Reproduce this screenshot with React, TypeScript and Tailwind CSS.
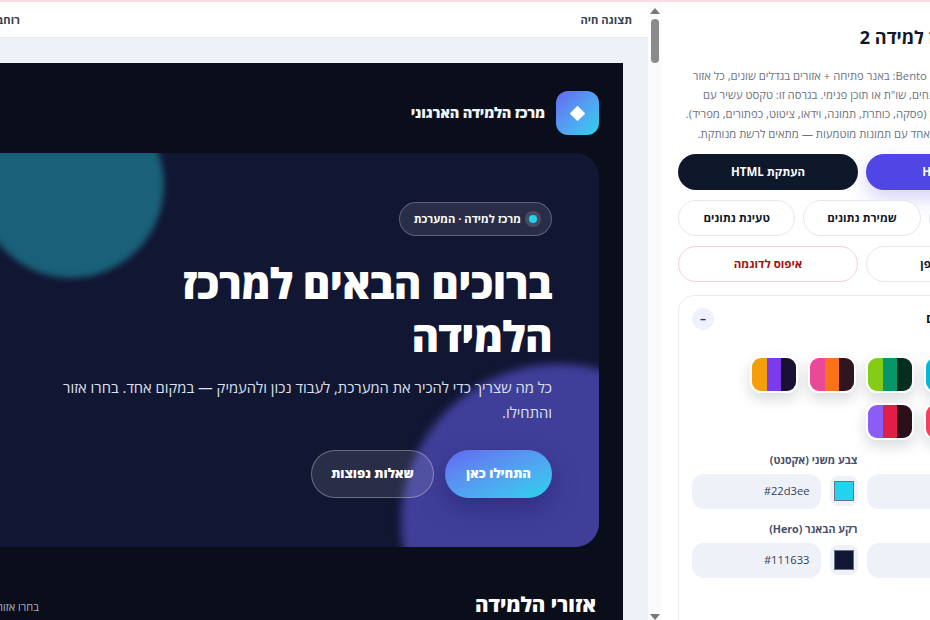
const swatchRows = [
  [
    ['#f59e0b', '#7c3aed', '#1a1033'],
    ['#ec4899', '#f97316', '#2e1520'],
    ['#84cc16', '#059669', '#052e1f'],
    ['#06b6d4', '#2563eb', '#0f172a'],
    ['#6366f1', '#22d3ee', '#111633'],
  ],
  [
    ['#8b5cf6', '#e11d48', '#2c0f1a'],
    ['#f43f5e', '#f59e0b', '#2a1215'],
    ['#14b8a6', '#0ea5e9', '#0c2a33'],
  ],
]

function Swatch({ colors }: { colors: string[] }) {
  return (
    <div className="flex h-[37px] w-[48px] overflow-hidden rounded-[11px] border-2 border-white shadow-[0_6px_14px_rgba(15,23,42,0.16)]">
      {colors.map((c) => (
        <span key={c} className="flex-1" style={{ backgroundColor: c }} />
      ))}
    </div>
  )
}

function ColorField({ label, value }: { label: string; value: string }) {
  return (
    <div>
      <div className="mb-[6px] h-[16px] text-[10.7px] font-bold leading-[16px] text-[#475069]">{label}</div>
      <div className="flex items-center gap-[9px]">
        <div className="flex h-[30px] w-[28px] shrink-0 items-center justify-center rounded-[8px] bg-[#eef2f8]">
          <span className="h-[20px] w-[20px] border border-[#64748b]" style={{ backgroundColor: value }} />
        </div>
        <div className="flex h-[35px] flex-1 items-center rounded-[12px] bg-[#eef2f8] px-[11px] text-[11.2px] text-[#334155]">{value}</div>
      </div>
    </div>
  )
}

export default function App() {
  return (
    <div className="h-[620px] w-[930px] overflow-hidden bg-white font-['Open_Sans','Liberation_Sans',sans-serif]">
      <div className="h-[2px] bg-[#f9dde0]" />
      <div className="ml-[-300px] flex h-[618px] w-[1362px]" dir="rtl">
        {/* settings panel */}
        <aside className="w-[400px] shrink-0 overflow-hidden bg-white px-[16px] pt-[22px]">
          <h2 className="text-[18px] font-bold leading-[26px] text-[#111827]">מחולל דף מרכז למידה 2</h2>
          <p className="mt-[16px] whitespace-nowrap text-[11.25px] leading-[19.2px] text-[#6b7280]">
            תבנית עיצוב חדשה בסגנון Bento: באנר פתיחה + אזורים בגדלים שונים, כל אזור
            <br />
            עם הסבר קצר, רשימת מונחים, שו"ת או תוכן פנימי. בגרסה זו: טקסט עשיר עם
            <br />
            וכולל עורך בלוקים של תוכן (פסקה, כותרת, תמונה, וידאו, ציטוט, כפתורים, מפריד).
            <br />
            והכול בקובץ HTML סטטי אחד עם תמונות מוטמעות — מתאים לרשת מנותקת.
          </p>
          <div className="mt-[11px] grid grid-cols-2 gap-[8px]">
            <button className="h-[36px] rounded-full bg-[#4f46e5] text-[11.5px] font-bold text-white shadow-[0_8px_20px_rgba(79,70,229,0.25)]">הורדת HTML</button>
            <button className="h-[36px] rounded-full bg-[#0f172a] text-[11.5px] font-bold text-white">העתקת HTML</button>
          </div>
          <div className="mt-[10px] grid grid-cols-3 gap-[8px]">
            <button className="h-[36px] rounded-full border border-[#e5e7eb] bg-white text-[11.5px] font-bold text-[#111827]">ייבוא</button>
            <button className="h-[36px] rounded-full border border-[#e5e7eb] bg-white text-[11.5px] font-bold text-[#111827]">שמירת נתונים</button>
            <button className="h-[36px] rounded-full border border-[#e5e7eb] bg-white text-[11.5px] font-bold text-[#111827]">טעינת נתונים</button>
          </div>
          <div className="mt-[10px] grid grid-cols-2 gap-[8px]">
            <button className="h-[36px] rounded-full border border-[#e5e7eb] bg-white text-[11.5px] font-bold text-[#111827]">תצוגה בדפדפן</button>
            <button className="h-[36px] rounded-full border border-[#f5d0d5] bg-white text-[11.5px] font-bold text-[#a50e0e]">איפוס לדוגמה</button>
          </div>
          <section className="mt-[13px] h-[400px] rounded-[16px] border border-[#e9edf3] px-[13px] pt-[12px]">
            <div className="flex h-[22px] items-center justify-between">
              <h3 className="text-[13px] font-bold text-[#111827]">ערכת צבע ונושאים</h3>
              <span className="flex h-[22px] w-[22px] items-center justify-center rounded-full bg-[#eef2ff] text-[12px] font-bold text-[#312e81]">–</span>
            </div>
            <div className="mt-[26px] mr-[2px] flex w-[290px] flex-col gap-[10px]">
              {swatchRows.map((row, i) => (
                <div key={i} className="flex justify-end gap-[10px]" dir="ltr">
                  {row.map((colors) => (
                    <Swatch key={colors.join()} colors={colors} />
                  ))}
                </div>
              ))}
            </div>
            <div className="mt-[12px] grid grid-cols-2 gap-x-[9px] gap-y-[12px]">
              <ColorField label="צבע ראשי" value="#6366f1" />
              <ColorField label="צבע משני (אקסנט)" value="#22d3ee" />
              <ColorField label="רקע העמוד" value="#0a0e1a" />
              <ColorField label="רקע הבאנר (Hero)" value="#111633" />
            </div>
          </section>
        </aside>

        {/* scrollbar */}
        <div className="flex w-[14px] shrink-0 flex-col items-center bg-[#fbfbfd] pt-[6px]">
          <span className="h-0 w-0 border-x-[5px] border-b-[6px] border-x-transparent border-b-[#777]" />
          <span className="mt-[5px] h-[44px] w-[8px] rounded-full bg-[#8a8a8a]" />
          <span className="mt-auto h-0 w-0 border-x-[5px] border-t-[6px] border-x-transparent border-t-[#777]" />
        </div>

        {/* live preview */}
        <main className="flex min-w-0 flex-1 flex-col bg-[#eef2f8]">
          <div className="flex h-[36px] shrink-0 items-center justify-between border-b border-[#e5e9f0] bg-white px-[16px] pt-[2px] text-[11.2px] font-bold text-[#374151]">
            <span>תצוגה חיה</span>
            <span className="w-[304px] shrink-0">רוחב תצוגה</span>
          </div>
          <div className="flex-1 overflow-hidden pr-[25px] pt-[25px]">
            <div className="h-[600px] bg-[#0a0e1a] px-[24px] pt-[28px]">
              <header className="flex items-center gap-[11px]">
                <span className="flex h-[44px] w-[43px] items-center justify-center rounded-[12px] bg-linear-to-br from-[#6366f1] to-[#22d3ee]">
                  <span className="h-[11px] w-[11px] rotate-45 rounded-[1px] bg-white" />
                </span>
                <span className="text-[14.5px] font-extrabold tracking-[-0.2px] text-[#f1f5f9]">מרכז הלמידה הארגוני</span>
              </header>
              <section className="relative mt-[18px] h-[394px] overflow-hidden rounded-[24px] bg-[#111633] pr-[47px] pt-[49px] text-white">
                <span className="absolute left-[254px] top-[-61px] h-[186px] w-[186px] rounded-full bg-[#1a6079] blur-[3px]" />
                <span className="absolute left-[677px] top-[211px] h-[316px] w-[316px] rounded-full bg-[#3f3f9a] blur-[4px]" />
                <div className="relative">
                  <span className="inline-flex h-[34px] items-center gap-[8px] rounded-full border border-white/25 bg-white/10 px-[14px] text-[11.2px] font-bold">
                    <span className="h-[8px] w-[8px] rounded-full bg-[#22d3ee] shadow-[0_0_0_4px_rgba(255,255,255,0.15)]" />
                    מרכז למידה · המערכת
                  </span>
                  <h1 className="mt-[20px] max-w-[510px] text-[42px] font-extrabold leading-[53px] tracking-[-0.6px]">ברוכים הבאים למרכז הלמידה</h1>
                  <p className="mt-[13px] max-w-[510px] text-[14.75px] leading-[25px] text-[#dde0ee]">כל מה שצריך כדי להכיר את המערכת, לעבוד נכון ולהעמיק — במקום אחד. בחרו אזור והתחילו.</p>
                  <div className="mt-[25px] flex gap-[11px]">
                    <button className="h-[48px] w-[107px] rounded-full bg-linear-to-br from-[#6366f1] to-[#22d3ee] text-[13px] font-extrabold shadow-[0_10px_24px_rgba(34,30,100,0.5)]">התחילו כאן</button>
                    <button className="h-[48px] w-[123px] rounded-full border border-white/30 bg-white/10 text-[13px] font-extrabold">שאלות נפוצות</button>
                  </div>
                </div>
              </section>
              <div className="mt-[41px] flex items-center justify-between pr-[3px]">
                <h2 className="text-[20.5px] font-extrabold leading-[32px] text-white">אזורי הלמידה</h2>
                <span className="mt-[6px] w-[315px] shrink-0 text-[11px] text-[#aab1c5]">בחרו אזור כדי להתחיל</span>
              </div>
            </div>
          </div>
        </main>
      </div>
    </div>
  )
}
